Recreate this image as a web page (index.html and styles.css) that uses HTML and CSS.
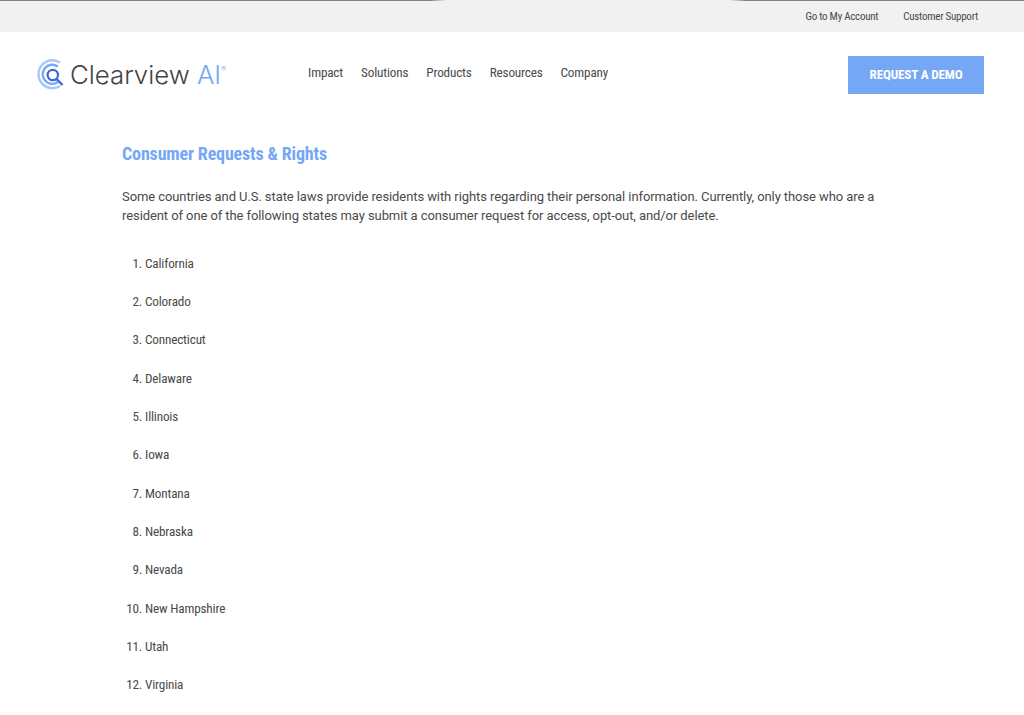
FILE: index.html
```html
<!DOCTYPE html>
<html lang="en">
<head>
<meta charset="utf-8">
<title>Consumer Requests &amp; Rights</title>
<link rel="stylesheet" href="styles.css">
</head>
<body>
<div class="topline"></div>
<div class="utility">
  <a>Go to My Account</a>
  <a>Customer Support</a>
</div>
<header class="header">
  <div class="logo">
    <svg class="mark" width="30" height="32" viewBox="0 0 30 32" fill="none">
      <path d="M23 3.4A14 14 0 1 0 23 27" stroke="#a9c8f7" stroke-width="2.4"/>
      <path d="M21 7.6A9.6 9.6 0 1 0 21 23" stroke="#7aa9f2" stroke-width="2.4"/>
      <circle cx="15.8" cy="16" r="5.2" stroke="#3f66d8" stroke-width="2.2"/>
      <path d="M19.5 20L25.5 26" stroke="#3f66d8" stroke-width="2.4"/>
    </svg>
    <span class="wordmark">Clearview <span class="ai">AI</span><sup class="reg">®</sup></span>
  </div>
  <nav class="nav">
    <a>Impact</a><a>Solutions</a><a>Products</a><a>Resources</a><a>Company</a>
  </nav>
  <a class="cta">REQUEST A DEMO</a>
</header>
<main class="content">
  <h1 class="title">Consumer Requests &amp; Rights</h1>
  <p class="intro">Some countries and U.S. state laws provide residents with rights regarding their personal information. Currently, only those who are a resident of one of the following states may submit a consumer request for access, opt-out, and/or delete.</p>
  <ol class="states">
    <li>California</li>
    <li>Colorado</li>
    <li>Connecticut</li>
    <li>Delaware</li>
    <li>Illinois</li>
    <li>Iowa</li>
    <li>Montana</li>
    <li>Nebraska</li>
    <li>Nevada</li>
    <li>New Hampshire</li>
    <li>Utah</li>
    <li>Virginia</li>
  </ol>
</main>
</body>
</html>
```
FILE: styles.css
```css
* { box-sizing: border-box; }
html, body { margin: 0; height: 715px; overflow: hidden; }
body { background: #fff; color: #4a4a4a; font-family: Roboto, "Liberation Sans", sans-serif; }
.topline { height: 1px; background: linear-gradient(90deg, #808080 0, #808080 430px, #f1f1f1 446px, #f1f1f1 730px, #808080 746px); }
.utility { height: 31px; background: #f1f1f1; display: flex; justify-content: flex-end; align-items: center; gap: 25px; padding: 0 46px 0 0; font-stretch: 75%; font-size: 11px; letter-spacing: -.26px; color: #4a4a4a; }
.header { height: 94px; display: flex; align-items: flex-start; padding: 24px 40px 0 37px; }
.logo { width: 271px; height: 40px; display: flex; align-items: center; gap: 3px; padding-bottom: 4px; }
.mark { flex: none; margin-top: 2px; }
.wordmark { font-family: Inter, sans-serif; font-size: 25.8px; font-weight: 300; color: #444; white-space: nowrap; }
.ai { color: #74a7f5; }
.reg { color: #74a7f5; font-size: 7px; vertical-align: 12px; line-height: 0; }
.nav { flex: 1; display: flex; gap: 18px; padding-top: 7.5px; font-stretch: 75%; font-size: 13.2px; letter-spacing: -.17px; line-height: 18px; color: #4a4a4a; }
.cta { width: 136px; height: 38px; background: #76a7f5; color: #fff; font-stretch: 75%; font-weight: 700; font-size: 13.2px; letter-spacing: -.18px; display: flex; align-items: center; justify-content: center; padding-bottom: 1px; }
.content { padding: 0 122px; }
.title { margin: 17px 0 0; font-stretch: 75%; font-size: 18px; letter-spacing: -.15px; line-height: 22px; font-weight: 700; color: #74a7f5; }
.intro { margin: 21.5px 0 0; font-size: 13px; letter-spacing: -.085px; line-height: 19px; color: #4a4a4a; width: 770px; }
.states { margin: 30px 0 0; padding: 0 0 0 23px; font-stretch: 75%; font-size: 13.2px; letter-spacing: -.17px; line-height: 18.36px; }
.states li { margin-bottom: 20px; }
```
